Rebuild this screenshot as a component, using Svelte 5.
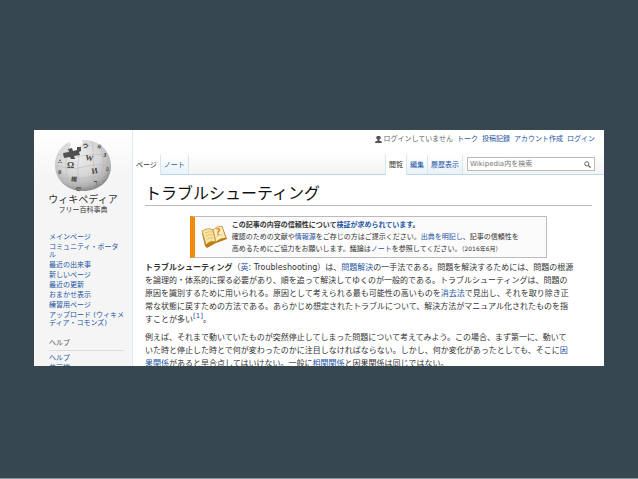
<script lang="ts">
	const personal = ['トーク', '投稿記録', 'アカウント作成', 'ログイン'];
	const mainLinks = [
		['メインページ'],
		['コミュニティ・ポータ', 'ル'],
		['最近の出来事'],
		['新しいページ'],
		['最近の更新'],
		['おまかせ表示'],
		['練習用ページ'],
		['アップロード (ウィキメ', 'ディア・コモンズ)']
	];
	const helpLinks = ['ヘルプ', '井戸端'];

	let query = $state('');
</script>

<main class="slide">
	<div class="wiki" lang="ja">
		<aside class="sidebar">
			<a class="logo" href="#top" aria-label="ウィキペディア フリー百科事典">
				<svg class="globe" viewBox="0 0 58 54" aria-hidden="true">
					<defs>
						<radialGradient id="ball" cx="42%" cy="32%" r="68%">
							<stop offset="0" stop-color="#ededed" />
							<stop offset="0.55" stop-color="#d6d6d6" />
							<stop offset="0.85" stop-color="#b4b4b4" />
							<stop offset="1" stop-color="#8c8c8c" />
						</radialGradient>
					</defs>
					<path
						fill="url(#ball)"
						d="M15 3 L17 6 L15 10 L18 13 L23 11 L25 14 L28 10 L26 7 L29 4 L28 1 C45 0 57 12 57 27 C57 42 45 52 29 52 C13 52 1 41 1 26 C1 15 7 7 15 3Z"
					/>
					<path
						fill="none"
						stroke="#b4b4b4"
						stroke-width="0.5"
						d="M5 15 Q16 20 28 17 T54 16 M2 26 Q16 32 29 28 T57 27 M5 39 Q18 42 30 39 T53 39 M14 10 Q9 25 15 47 M25 16 Q22 32 27 51 M38 2 Q41 23 38 50 M47 8 Q52 25 47 45"
					/>
					<path
						fill="#505050"
						d="M9 14 L15 13 L14 10 L18 9 L19 12 L23 11 L23 8 L27 8 L27 12 L25 13 L26 16 L20 17 L21 20 L17 20 L16 18 L10 19Z"
					/>
					<g class="glyphs">
						<text x="13" y="29" font-size="9">Ω</text>
						<text x="31" y="21" font-size="8" transform="rotate(8 31 21)">W</text>
						<text x="38" y="35" font-size="8" transform="rotate(-10 38 35)">И</text>
						<text x="17" y="42" font-size="6" transform="rotate(6 17 42)">維</text>
						<text x="40" y="46" font-size="7">ר</text>
						<text x="49" y="18" font-size="7">J</text>
						<text x="28" y="8" font-size="6" transform="rotate(20 28 8)">ウ</text>
						<text x="43" y="8" font-size="6" transform="rotate(35 43 8)">й</text>
						<text x="4" y="24" font-size="5">ஃ</text>
						<text x="4" y="35" font-size="5">ᱣ</text>
						<text x="22" y="51" font-size="5">ლ</text>
						<text x="52" y="31" font-size="5">ე</text>
					</g>
				</svg>
				<span class="name">ウィキペディア</span>
				<span class="tagline">フリー百科事典</span>
			</a>
			<nav class="portal">
				<ul>
					{#each mainLinks as parts}
						<li>
							<a href="#top">{#each parts as part}<span>{part}</span>{/each}</a>
						</li>
					{/each}
				</ul>
				<h3>ヘルプ</h3>
				<ul>
					{#each helpLinks as item}
						<li><a href="#top">{item}</a></li>
					{/each}
				</ul>
			</nav>
		</aside>

		<div class="body">
			<header>
				<div class="personal">
					<span class="user">
						<svg viewBox="0 0 8 8" aria-hidden="true">
							<path fill="#555" d="M4 0a2 2 0 0 1 1 4v1l2 1q1 0 1 2H0q0-2 1-2l2-1V4a2 2 0 0 1 1-4z" />
						</svg>
						ログインしていません
					</span>
					{#each personal as item}
						<a href="#top">{item}</a>
					{/each}
				</div>
				<div class="bar">
					<nav class="tabs">
						<a class="active" href="#top">ページ</a>
						<a href="#top">ノート</a>
					</nav>
					<nav class="tabs views">
						<a class="active" href="#top">閲覧</a>
						<a href="#top">編集</a>
						<a href="#top">履歴表示</a>
					</nav>
					<form class="search" onsubmit={(e) => e.preventDefault()}>
						<input
							type="search"
							aria-label="検索"
							placeholder="Wikipedia内を検索"
							bind:value={query}
						/>
						<button aria-label="表示">
							<svg viewBox="0 0 8 8" aria-hidden="true">
								<circle cx="3.2" cy="3.2" r="2.4" fill="none" stroke="#555" stroke-width="1" />
								<path d="M5 5 L7.5 7.5" stroke="#555" stroke-width="1.4" />
							</svg>
						</button>
					</form>
				</div>
			</header>

			<article>
				<h1>トラブルシューティング</h1>

				<div class="notice">
					<svg class="book" viewBox="0 0 26 22" aria-hidden="true">
						<path fill="#c17a16" d="M1 7 L9 3 L13 4 L21 0 L26 13 L18 16 L15 17 L6 22 L4 20Z" />
						<path fill="#f9e3a0" stroke="#a8771f" stroke-width="0.6" d="M1 5 Q7 1 12 4 L15 16 Q9 14 5 19Z" />
						<path fill="#fbedb9" stroke="#a8771f" stroke-width="0.6" d="M12 4 Q15 0 21 0 L25 12 Q19 12 15 16Z" />
						<path
							fill="none"
							stroke="#d6ad55"
							stroke-width="0.6"
							d="M4 7 Q8 5 11 6 M5 10 Q8 8 12 9 M6 13 Q9 11 12 12 M15 11 Q18 8 22 9"
						/>
						<text x="15" y="9" font-size="8" fill="#e07b1c" font-weight="bold">?</text>
					</svg>
					<p>
						<b>この記事の内容の信頼性について<a href="#top">検証が求められています</a>。</b><br />
						確認のための文献や<a href="#top">情報源</a>をご存じの方はご提示ください。<a href="#top">出典を明記し</a>、記事の信頼性を<br />
						高めるためにご協力をお願いします。議論は<a href="#top">ノート</a>を参照してください。<small>（2016年6月）</small>
					</p>
				</div>

				<p>
					<b>トラブルシューティング</b>（<a href="#top">英</a>: Troubleshooting）は、<a href="#top">問題解決</a>の一手法である。問題を解決するためには、問題の根源<br />
					を論理的・体系的に探る必要があり、順を追って解決してゆくのが一般的である。トラブルシューティングは、問題の<br />
					原因を識別するために用いられる。原因として考えられる最も可能性の高いものを<a href="#top">消去法</a>で見出し、それを取り除き正<br />
					常な状態に戻すための方法である。あらかじめ想定されたトラブルについて、解決方法がマニュアル化されたものを指<br />
					すことが多い<sup><a href="#top">[1]</a></sup>。
				</p>
				<p>
					例えば、それまで動いていたものが突然停止してしまった問題について考えてみよう。この場合、まず第一に、動いて<br />
					いた時と停止した時とで何が変わったのかに注目しなければならない。しかし、何か変化があったとしても、そこに<a href="#top">因</a><br />
					<a href="#top">果関係</a>があると早合点してはいけない。一般に<a href="#top">相関関係</a>と因果関係は同じではない。
				</p>
			</article>
		</div>
	</div>
</main>

<style>
	:global(body) {
		margin: 0;
	}

	.slide {
		display: flex;
		height: 100vh;
		box-sizing: border-box;
		padding: 130px 34px 112px;
		background: #37474f;
		border-bottom: 1px solid #8b969b;
	}

	.wiki {
		display: flex;
		flex: 1;
		overflow: hidden;
		background: #fff;
		color: #333;
		font-family: 'DejaVu Sans', 'Noto Sans CJK JP', sans-serif;
		font-size: 8px;
		line-height: 13px;
		white-space: nowrap;
	}

	a {
		color: #2456a4;
		text-decoration: none;
	}

	ul {
		list-style: none;
		margin: 0;
		padding: 0;
	}

	/* sidebar */
	.sidebar {
		flex: 0 0 98px;
		box-sizing: border-box;
		border-right: 1px solid #d9eaf3;
		background: linear-gradient(#fff, #f5f5f5 50px);
		font-size: 7px;
		line-height: 8px;
	}

	.logo {
		display: flex;
		flex-direction: column;
		align-items: center;
		padding-top: 9px;
		color: #333;
	}

	.globe {
		width: 58px;
		height: 54px;
	}

	.glyphs {
		fill: #444;
		font-family: 'Liberation Serif', 'Noto Sans CJK JP', serif;
		font-weight: bold;
	}

	.name {
		font-family: 'Noto Sans CJK JP', sans-serif;
		font-size: 10px;
		line-height: 12px;
	}

	.tagline {
		line-height: 10px;
	}

	.portal {
		padding: 18px 8px 0 15px;
	}

	.portal li {
		padding-bottom: 2px;
	}

	.portal li span {
		display: block;
	}

	h3 {
		margin: 10px 0 3px;
		padding-bottom: 3px;
		border-bottom: 1px solid #ddd;
		color: #555;
		font-size: 7px;
		font-weight: normal;
		line-height: 8px;
	}

	/* top bar */
	.body {
		flex: 1;
		min-width: 0;
	}

	header {
		padding-right: 9px;
		background: linear-gradient(#fff 50%, #f4f4f4);
		border-bottom: 1px solid #b9d9ea;
		font-size: 7px;
	}

	.personal {
		display: flex;
		justify-content: flex-end;
		gap: 4px;
		padding-top: 3px;
		line-height: 13px;
	}

	.user {
		display: flex;
		align-items: center;
		gap: 1px;
		color: #666;
	}

	.user svg {
		width: 7px;
		height: 7px;
	}

	.bar {
		display: flex;
		align-items: flex-end;
		padding-top: 9px;
	}

	.tabs {
		display: flex;
	}

	.tabs a {
		padding: 4px 3px 2px;
		border-right: 1px solid #d5e7f1;
		background: linear-gradient(#fff, #e8f2f8);
		line-height: 13px;
	}

	.tabs .active {
		margin-bottom: -1px;
		padding-bottom: 3px;
		background: #fff;
		color: #333;
	}

	.views {
		margin-left: auto;
		border-left: 1px solid #d5e7f1;
	}

	.search {
		display: flex;
		width: 128px;
		height: 14px;
		box-sizing: border-box;
		margin: 0 0 3px 4px;
		border: 1px solid #bbb;
		background: #fff;
	}

	.search input {
		flex: 1;
		min-width: 0;
		padding: 0 2px;
		border: 0;
		outline: 0;
		background: none;
		font: inherit;
		line-height: 12px;
	}

	.search input::placeholder {
		color: #777;
	}

	.search button {
		display: flex;
		align-items: center;
		padding: 0 3px;
		border: 0;
		background: none;
	}

	.search button svg {
		width: 7px;
		height: 7px;
	}

	/* article */
	article {
		padding: 7px 12px 0;
	}

	h1 {
		margin: 0;
		border-bottom: 1px solid #bbb;
		color: #111;
		font-size: 16px;
		font-weight: normal;
		line-height: 23px;
	}

	p {
		margin: 0 0 5px;
	}

	.notice {
		display: flex;
		align-items: center;
		box-sizing: border-box;
		width: 80%;
		margin: 10px auto 3px;
		padding: 1px 2px;
		border: 1px solid #bbb;
		border-left: 5px solid #ef8a0c;
		background: #fbfbfb;
		font-size: 7px;
		line-height: 12px;
	}

	.notice p {
		margin: 0;
		padding: 1px 0;
	}

	.book {
		width: 26px;
		height: 22px;
		margin: 0 5px 0 4px;
	}

	small {
		font-size: 6px;
	}

	sup {
		line-height: 0;
		font-size: 7px;
	}
</style>
